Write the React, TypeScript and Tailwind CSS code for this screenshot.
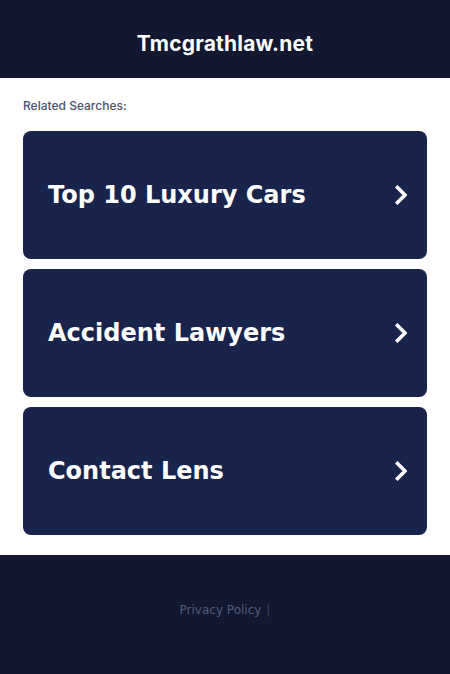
const searches = ['Top 10 Luxury Cars', 'Accident Lawyers', 'Contact Lens']

function Chevron() {
  return (
    <svg width="12" height="20" viewBox="0 0 12 20" fill="none">
      <path d="M2.5 2.5l7.5 7.5-7.5 7.5" stroke="white" strokeWidth="3.6" strokeLinecap="square" />
    </svg>
  )
}

export default function App() {
  return (
    <div className="min-h-[674px] bg-white font-['DejaVu_Sans',sans-serif]">
      <header className="flex h-[78px] justify-center bg-[#111830] pt-[31px]">
        <h1 className="font-['Inter',sans-serif] text-[21px] leading-[26px] font-bold tracking-[0.2px] text-white">
          Tmcgrathlaw.net
        </h1>
      </header>

      <main className="px-[23px] pt-[20px] pb-[20px]">
        <p className="mb-[17px] font-['Inter',sans-serif] text-[12px] leading-[16px] font-medium text-[#4b5270]">
          Related Searches:
        </p>
        <div className="flex flex-col gap-[10px]">
          {searches.map((s) => (
            <a
              key={s}
              href="#"
              className="flex h-[128px] items-center justify-between rounded-[8px] bg-[#19244c] pr-[20px] pl-[25px]"
            >
              <span className="text-[24px] font-bold text-white">{s}</span>
              <Chevron />
            </a>
          ))}
        </div>
      </main>

      <footer className="flex h-[119px] justify-center bg-[#111830] pt-[46px] text-[12px] leading-[18px] text-[#555c7a]">
        <span>Privacy Policy</span>
        <span className="ml-[5px] text-[#3a4060]">|</span>
      </footer>
    </div>
  )
}
